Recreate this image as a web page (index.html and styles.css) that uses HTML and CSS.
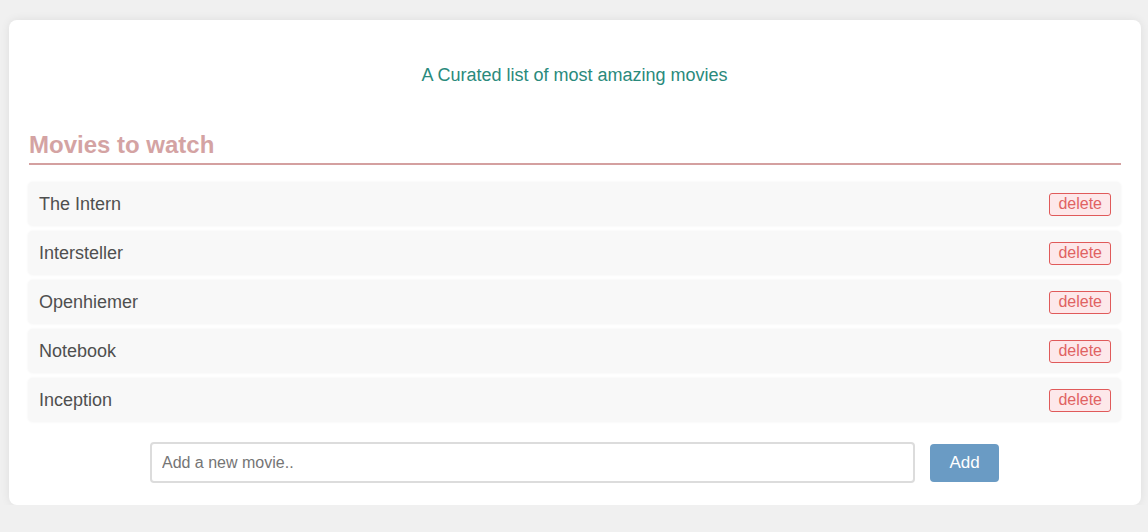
FILE: index.html
```html
<!DOCTYPE html>
<html>
<head>
<meta charset="utf-8">
<link rel="stylesheet" href="styles.css">
</head>
<body>
<div class="card">
  <p class="subtitle">A Curated list of most amazing movies</p>
  <h2 class="heading">Movies to watch</h2>
  <ul class="list">
    <li class="row"><span class="title">The Intern</span><button class="del">delete</button></li>
    <li class="row"><span class="title">Intersteller</span><button class="del">delete</button></li>
    <li class="row"><span class="title">Openhiemer</span><button class="del">delete</button></li>
    <li class="row"><span class="title">Notebook</span><button class="del">delete</button></li>
    <li class="row"><span class="title">Inception</span><button class="del">delete</button></li>
  </ul>
  <form class="add-form">
    <input class="add-input" type="text" placeholder="Add a new movie..">
    <button class="add-btn" type="button">Add</button>
  </form>
</div>
</body>
</html>
```
FILE: styles.css
```css
html, body {
  margin: 0;
  padding: 0;
  background: #f0f0f0;
  font-family: "Liberation Sans", Arial, sans-serif;
}
body {
  padding: 20px 7px 0 9px;
}
.card {
  background: #fff;
  border-radius: 8px;
  box-shadow: 0 0 10px rgba(0,0,0,0.08);
  padding: 20px 20px 22px 19px;
}
.subtitle {
  margin: 0;
  padding-top: 25px;
  text-align: center;
  color: #2a8a7c;
  font-size: 18px;
  line-height: 20px;
  height: 20px;
}
.heading {
  margin: 46px 0 0 1px;
  color: #d4a3a3;
  font-size: 24px;
  line-height: 28px;
  font-weight: bold;
  padding-bottom: 4px;
  border-bottom: 2px solid #d4a0a0;
}
.list {
  list-style: none;
  margin: 17px 0 0 0;
  padding: 0;
}
.row {
  display: flex;
  align-items: center;
  justify-content: space-between;
  height: 44px;
  box-sizing: border-box;
  padding: 0 10px 0 11px;
  margin-bottom: 5px;
  background: #f8f8f8;
  border-radius: 5px;
  box-shadow: 0 0 3px rgba(0,0,0,0.05);
}
.title {
  font-size: 18px;
  color: #4f4f4f;
}
.del {
  font-family: "Liberation Sans", Arial, sans-serif;
  font-size: 16px;
  color: #e06262;
  background: #fde8ea;
  border: 1px solid #e05a5a;
  border-radius: 3px;
  height: 23px;
  padding: 0 8px;
  line-height: 20px;
}
.add-form {
  display: flex;
  justify-content: center;
  align-items: center;
  gap: 15px;
  margin-top: 20px;
}
.add-input {
  width: 70%;
  height: 41px;
  box-sizing: border-box;
  border: 2px solid #dcdcdc;
  border-radius: 4px;
  padding: 0 10px;
  font-family: "Liberation Sans", Arial, sans-serif;
  font-size: 16px;
  color: #333;
}
.add-input::placeholder {
  color: #757575;
}
.add-btn {
  width: 69px;
  height: 38px;
  border: none;
  border-radius: 4px;
  background: #6a9bc4;
  color: #fff;
  font-family: "Liberation Sans", Arial, sans-serif;
  font-size: 17px;
}
```
